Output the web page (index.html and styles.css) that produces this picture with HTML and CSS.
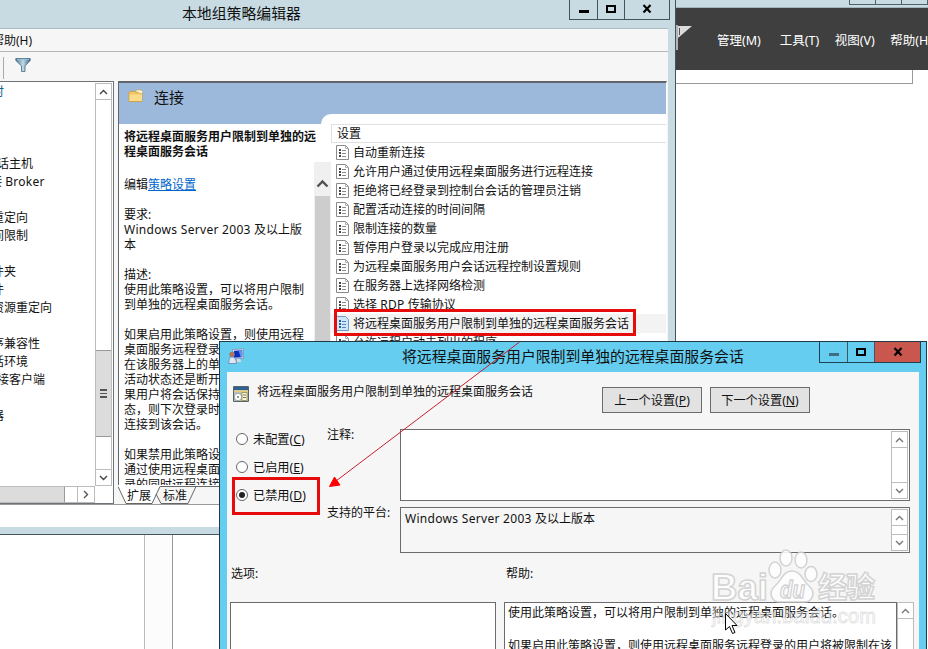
FILE: index.html
```html
<!DOCTYPE html>
<html lang="zh-CN">
<head>
    <meta charset="UTF-8">
    <title>本地组策略编辑器</title>
    <link rel="stylesheet" href="styles.css">
</head>
<body>
<svg class="defs" width="0" height="0">
    <symbol id="doc" viewBox="0 0 13 15">
        <path d="M.5.5h9l3 3v11H.5z" fill="#fff" stroke="#8a8a8a"/>
        <path d="M9.5.5v3h3" fill="none" stroke="#b0b0b0"/>
        <path d="M3 4h2v2H3zM3 7h2v2H3zM3 10h2v2H3z" fill="#444"/>
        <path d="M6 5.5h4M6 8.5h4M6 11.5h4" stroke="#8a8a8a"/>
    </symbol>
    <symbol id="doc-blue" viewBox="0 0 13 15">
        <path d="M.5.5h9l3 3v11H.5z" fill="#cfe5f8" stroke="#6f9cc5"/>
        <path d="M3 4h2v2H3zM3 7h2v2H3zM3 10h2v2H3z" fill="#235f9c"/>
        <path d="M6 5.5h4M6 8.5h4M6 11.5h4" stroke="#4f86bb"/>
    </symbol>
    <symbol id="up" viewBox="0 0 9 6"><path d="M1 5l3.5-3.5L8 5" fill="none" stroke="currentColor" stroke-width="1.4"/></symbol>
    <symbol id="down" viewBox="0 0 9 6"><path d="M1 1l3.5 3.5L8 1" fill="none" stroke="currentColor" stroke-width="1.4"/></symbol>
    <symbol id="win-min" viewBox="0 0 10 10"><path d="M0 6h10v3H0z" fill="currentColor"/></symbol>
    <symbol id="win-max" viewBox="0 0 10 10"><path d="M1 2h8v6H1z" fill="none" stroke="currentColor" stroke-width="2"/></symbol>
    <symbol id="win-close" viewBox="0 0 10 10"><path d="M1.5 1l7 7.500M8.500 1l-7 7.500" stroke="currentColor" stroke-width="2.100"/></symbol>
</svg>

<div class="desktop">
    <!-- Server manager in the background -->
    <div class="manager">
        <div class="manager-top">
            <div class="manager-buttons"><i></i><i></i><i></i></div>
        </div>
        <div class="manager-bar">
            <svg class="flag" width="17" height="25" viewBox="0 0 17 25"><path d="M0 0h2v25H0z" fill="#b5b5b5"/><path d="M2 1h14L2 13z" fill="#dcdcdc"/><path d="M3.500 3v7" stroke="#555"/></svg>
            <span>管理(M)</span>
            <span>工具(T)</span>
            <span>视图(V)</span>
            <span>帮助(H)</span>
        </div>
        <div class="manager-panel"></div>
    </div>
    <div class="behind"><div class="behind-gap"></div></div>

    <!-- Group policy editor -->
    <div class="editor">
        <div class="editor-title">
            <span class="title-text">本地组策略编辑器</span>
            <div class="win-buttons">
                <b class="min"><svg width="10" height="10"><use href="#win-min"/></svg></b>
                <b class="max"><svg width="10" height="10"><use href="#win-max"/></svg></b>
                <b class="close"><svg width="10" height="10"><use href="#win-close"/></svg></b>
            </div>
        </div>
        <div class="editor-client">
            <div class="menu"><span>帮助(H)</span></div>
            <div class="toolbar">
                <svg width="16" height="16" viewBox="0 0 16 16">
                    <defs><linearGradient id="funnel"><stop offset="0" stop-color="#4b7491"/><stop offset=".5" stop-color="#c3dbea"/><stop offset="1" stop-color="#35607e"/></linearGradient></defs>
                    <path d="M.8 1.500h14.400v2L10 9v5.500H6.500V9L.8 3.500z" fill="url(#funnel)" stroke="#4a6e88" stroke-width=".8"/>
                    <path d="M2 2.700h12" stroke="#9cc0d8"/>
                </svg>
            </div>
            <div class="panes">
                <div class="tree-pane">
                    <div class="tree-main">
                        <ul class="tree">
                            <li class="accent">时</li>
                            <li></li><li></li><li></li>
                            <li class="near">话主机</li>
                            <li class="far">接 <span class="latin">Broker</span></li>
                            <li></li>
                            <li>重定向</li>
                            <li>间限制</li>
                            <li></li>
                            <li>件夹</li>
                            <li>件</li>
                            <li>资源重定向</li>
                            <li></li>
                            <li>序兼容性</li>
                            <li>话环境</li>
                            <li class="near">接客户端</li>
                            <li></li>
                            <li>器</li>
                        </ul>
                        <div class="scroll tree-scroll">
                            <div class="scroll-btn"><svg width="9" height="6"><use href="#up"/></svg></div>
                            <div class="scroll-track"><div class="tree-thumb"><i></i><i></i><i></i></div></div>
                            <div class="scroll-btn"><svg width="9" height="6"><use href="#down"/></svg></div>
                        </div>
                    </div>
                    <div class="tree-hscroll">
                        <div class="hthumb"></div>
                        <div class="hbtn"><svg width="6" height="9" viewBox="0 0 6 9"><path d="M1 1l3.500 3.500L1 8" fill="none" stroke="#555" stroke-width="1.400"/></svg></div>
                    </div>
                </div>
                <div class="detail-pane">
                    <div class="detail-view">
                        <div class="detail-head">
                            <svg width="16" height="14" viewBox="0 0 16 14"><path d="M1 3.500l1-1h5l1 1h6v9H1z" fill="#f3c663" stroke="#c99a3c" stroke-width=".8"/><path d="M8 3V1h5l1.500 1.500V5z" fill="#fff6d8" stroke="#c9a85a" stroke-width=".7"/><path d="M1.500 5.500h12.500V12H1.500z" fill="#fbdc88"/></svg>
                            <span>连接</span>
                        </div>
                        <div class="detail-body">
                            <div class="description">
                                <h2>将远程桌面服务用户限制到单独的远<br>程桌面服务会话</h2>
                                <p class="edit">编辑<a>策略设置</a></p>
                                <p>要求:<br><span class="latin">Windows Server 2003</span> 及以上版<br>本</p>
                                <p>描述:<br>使用此策略设置，可以将用户限制<br>到单独的远程桌面服务会话。</p>
                                <p>如果启用此策略设置，则使用远程<br>桌面服务远程登录<br>在该服务器上的单<br>活动状态还是断开<br>果用户将会话保持<br>态，则下次登录时<br>连接到该会话。</p>
                                <p>如果禁用此策略设<br>通过使用远程桌面<br>录的同时远程连接</p>
                            </div>
                            <div class="desc-scroll">
                                <div class="desc-up"><svg width="13" height="9" viewBox="0 0 13 9"><path d="M1.500 7.500l5-5 5 5" fill="none" stroke="#505050" stroke-width="2.400"/></svg></div>
                                <div class="desc-thumb"></div>
                            </div>
                            <div class="settings">
                                <div class="settings-head">设置</div>
                                <ul>
                                    <li><svg width="13" height="15"><use href="#doc"/></svg>自动重新连接</li>
                                    <li><svg width="13" height="15"><use href="#doc"/></svg>允许用户通过使用远程桌面服务进行远程连接</li>
                                    <li><svg width="13" height="15"><use href="#doc"/></svg>拒绝将已经登录到控制台会话的管理员注销</li>
                                    <li><svg width="13" height="15"><use href="#doc"/></svg>配置活动连接的时间间隔</li>
                                    <li><svg width="13" height="15"><use href="#doc"/></svg>限制连接的数量</li>
                                    <li><svg width="13" height="15"><use href="#doc"/></svg>暂停用户登录以完成应用注册</li>
                                    <li><svg width="13" height="15"><use href="#doc"/></svg>为远程桌面服务用户会话远程控制设置规则</li>
                                    <li><svg width="13" height="15"><use href="#doc"/></svg>在服务器上选择网络检测</li>
                                    <li><svg width="13" height="15"><use href="#doc"/></svg><span>选择 <span class="latin">RDP</span> 传输协议</span></li>
                                    <li class="selected"><svg width="13" height="15"><use href="#doc-blue"/></svg>将远程桌面服务用户限制到单独的远程桌面服务会话</li>
                                    <li><svg width="13" height="15"><use href="#doc"/></svg>允许远程启动未列出的程序</li>
                                </ul>
                            </div>
                        </div>
                    </div>
                    <div class="tabs">
                        <svg class="tab-lines" width="550" height="20" viewBox="0 0 550 20"><path d="M0 1.500L8 18.500H34L42 1.500H550V0H0z" fill="#fff"/><path d="M0 1.500L8 18.500H34L42 1.500H550M38 9l5 9.500h27L78 1.500" fill="none" stroke="#666"/></svg>
                        <span>扩展</span><span>标准</span>
                    </div>
                </div>
            </div>
            <div class="status"></div>
        </div>
    </div>

    <!-- Policy setting dialog -->
    <div class="dialog">
        <div class="dialog-title">
            <svg class="app-icon" width="17" height="17" viewBox="0 0 17 17"><path d="M4.500 1.500l11-.5v9.500l-11 .5z" fill="#eef2f8" stroke="#7f8da8" stroke-width=".8"/><path d="M5.800 2.700l8.500-.4v7l-8.500.4z" fill="#0a2ec0"/><path d="M10.500 2.500l3.800-.2v7l-1.500.1z" fill="#5d94f0"/><path d="M9 11h3l1.500 3H9z" fill="#d8d8e0"/><circle cx="4" cy="6.500" r="2.700" fill="#a8795c"/><path d="M.8 15.500c0-4.500 1.200-6.500 3.200-6.500s4.300 2 4.300 6.500z" fill="#dfe8f4" stroke="#6483aa" stroke-width=".8"/></svg>
            <span class="title-text">将远程桌面服务用户限制到单独的远程桌面服务会话</span>
            <div class="win-buttons">
                <b class="min"><svg width="10" height="10"><use href="#win-min"/></svg></b>
                <b class="max"><svg width="10" height="10"><use href="#win-max"/></svg></b>
                <b class="close"><svg width="10" height="10"><use href="#win-close"/></svg></b>
            </div>
        </div>
        <div class="dialog-client">
            <div class="dialog-head">
                <svg width="16" height="16" viewBox="0 0 16 16"><path d="M.5.5h15v15H.5z" fill="#b9c2b4" stroke="#56646c"/><path d="M1 1h14v3H1z" fill="#2f5f93"/><path d="M1 4.500h14v1.500H1z" fill="#e6cf7a"/><circle cx="5" cy="11" r="3.700" fill="#fff" stroke="#7b898e" stroke-width=".7"/><circle cx="5" cy="11" r="1" fill="#66727a"/><path d="M9 6.500h5v8H9z" fill="#fffbe0" stroke="#a99a5c"/><path d="M10 9h3M10 11.500h3" stroke="#77775c"/></svg>
                <span class="dialog-name">将远程桌面服务用户限制到单独的远程桌面服务会话</span>
                <button>上一个设置(<u>P</u>)</button>
                <button>下一个设置(<u>N</u>)</button>
            </div>
            <div class="dialog-form">
                <div class="radios">
                    <label><i class="radio"></i><span>未配置(<u>C</u>)</span></label>
                    <label><i class="radio"></i><span>已启用(<u>E</u>)</span></label>
                    <label><i class="radio checked"></i><span>已禁用(<u>D</u>)</span></label>
                </div>
                <div class="fields">
                    <div class="field comment">
                        <span class="caption">注释:</span>
                        <div class="box">
                            <div class="box-text"></div>
                            <div class="scroll">
                                <div class="scroll-btn"><svg width="9" height="6"><use href="#up"/></svg></div>
                                <div class="scroll-track"></div>
                                <div class="scroll-btn"><svg width="9" height="6"><use href="#down"/></svg></div>
                            </div>
                        </div>
                    </div>
                    <div class="field platform">
                        <span class="caption">支持的平台:</span>
                        <div class="box">
                            <div class="box-text"><span class="latin">Windows Server 2003</span> 及以上版本</div>
                            <div class="scroll">
                                <div class="scroll-btn"><svg width="9" height="6"><use href="#up"/></svg></div>
                                <div class="scroll-track"></div>
                                <div class="scroll-btn"><svg width="9" height="6"><use href="#down"/></svg></div>
                            </div>
                        </div>
                    </div>
                </div>
            </div>
            <div class="lower-captions"><span>选项:</span><span>帮助:</span></div>
            <div class="lower-boxes">
                <div class="options-box"></div>
                <div class="help-box">使用此策略设置，可以将用户限制到单独的远程桌面服务会话。<br><br>如果启用此策略设置，则使用远程桌面服务远程登录的用户将被限制在该</div>
                <div class="scroll">
                    <div class="scroll-btn"><svg width="9" height="6"><use href="#up"/></svg></div>
                    <div class="scroll-track"></div>
                </div>
            </div>
        </div>
    </div>

    <!-- Annotations, watermark and pointer drawn over the windows -->
    <div class="mark mark-setting"></div>
    <div class="mark mark-disabled"></div>
    <svg class="overlay" width="928" height="649" viewBox="0 0 928 649">
        <path d="M519.500 342L336 481" stroke="#c8202c" stroke-width="1" fill="none"/>
        <path d="M329.500 486.500l5-9.500 5.500 8z" fill="#f00" stroke="#f00"/>
        <g class="watermark">
            <text class="wm-brand" x="711" y="600" textLength="57" lengthAdjust="spacingAndGlyphs">Bai</text>
            <ellipse cx="775" cy="570" rx="6" ry="8"/>
            <ellipse cx="786" cy="558" rx="6" ry="8"/>
            <ellipse cx="801" cy="560" rx="6" ry="8"/>
            <ellipse cx="811" cy="574" rx="6" ry="7.500"/>
            <path d="M792 571c9 0 11 10 17 15 7 6 4 16-5 16-7 0-17 0-24 0-9 0-12-10-5-16 6-5 8-15 17-15z"/>
            <text class="wm-du" x="780" y="598" textLength="25" lengthAdjust="spacingAndGlyphs">du</text>
            <text class="wm-cn" x="818" y="598" textLength="57">经验</text>
            <text class="wm-url" x="712" y="623" textLength="164">jingyan.baidu.com</text>
        </g>
        <path d="M725.500 613.500v16.500l4-3.500 3 7 2.500-1-3-7h5z" fill="#fff" stroke="#000"/>
    </svg>
</div>
</body>
</html>
```
FILE: styles.css
```css
* {
    margin: 0;
    padding: 0;
    box-sizing: border-box;
}

body {
    font-family: "Noto Sans", "Noto Sans CJK SC", sans-serif;
    font-size: 12px;
    color: #111;
    background: #fff;
    overflow: hidden;
}

ul {
    list-style: none;
}

svg {
    display: block;
    flex-shrink: 0;
}

.defs {
    position: absolute;
}

.desktop {
    position: relative;
    width: 928px;
    height: 649px;
    overflow: hidden;
    white-space: nowrap;
}

.latin {
    letter-spacing: 0.3px;
}

/* Server manager */
.manager {
    position: absolute;
    left: 676px;
    top: 0;
    width: 252px;
}

.manager-top {
    height: 8px;
    background: #c8dbe2;
    border-bottom: 1px solid #a5b4ba;
    display: flex;
    justify-content: flex-end;
}

.manager-buttons {
    display: flex;
    width: 79px;
    height: 5px;
    border: 1px solid #4f626c;
    border-width: 0 0 1px 1px;
}

.manager-buttons i {
    width: 27px;
    border-right: 1px solid #4f626c;
}

.manager-bar {
    display: flex;
    align-items: center;
    height: 62px;
    padding-top: 1px;
    background: #3f3f3f;
    color: #fff;
    overflow: hidden;
}

.manager-bar span {
    margin-right: 15.5px;
    font-size: 12.5px;
}

.manager-bar span:nth-of-type(1) {
    margin-right: 19px;
}

.flag {
    margin-right: 24px;
    margin-top: -4px;
}

.manager-panel {
    width: 237px;
    height: 14px;
    border: 1px solid #999;
    border-width: 0 1px 1px 0;
}

.behind {
    position: absolute;
    left: 0;
    top: 535px;
    width: 219px;
    height: 114px;
    padding-left: 144px;
}

.behind-gap {
    width: 29px;
    height: 114px;
    background: #fcfcfc;
    border-left: 1px solid #bbb;
    border-right: 1px solid #999;
}

/* Window buttons */
.win-buttons {
    display: flex;
    border: 1px solid #44545c;
    border-top: 0;
}

.win-buttons b {
    display: flex;
    align-items: center;
    justify-content: center;
    padding-bottom: 1px;
    color: #000;
}

.win-buttons b + b {
    border-left: 1px solid #44545c;
}

.title-text {
    font-size: 14.87px;
    flex: 1;
}

/* Scrollbars */
.scroll {
    display: flex;
    flex-direction: column;
    width: 17px;
    border: 1px solid #bcbcbc;
    background: #fff;
    color: #777;
}

.scroll-btn {
    display: flex;
    align-items: center;
    justify-content: center;
    height: 15px;
    flex-shrink: 0;
}

.scroll-track {
    flex: 1;
    border: 1px solid #bcbcbc;
    border-width: 1px 0;
}

/* Editor window */
.editor {
    position: absolute;
    left: 0;
    top: 0;
    width: 676px;
    height: 535px;
    padding-right: 7px;
    background: #c8dbe2;
    border: 1px solid #44545c;
    border-width: 0 1px 1px 0;
}

.editor-title {
    display: flex;
    height: 28px;
    padding-left: 182px;
    margin-right: -2px;
}

.editor-title .title-text {
    line-height: 27px;
}

.editor-title .win-buttons {
    width: 101px;
    height: 20px;
}

.editor-title .min {
    width: 27px;
}

.editor-title .max {
    width: 27px;
}

.editor-title .close {
    flex: 1;
}

.editor-client {
    height: 499px;
    background: #f6f6f6;
    border-top: 1px solid #aebcc2;
}

.menu {
    height: 23px;
    line-height: 23px;
    border-bottom: 1px solid #b8b8b8;
}

.menu span {
    margin-left: -8px;
}

.toolbar {
    display: flex;
    height: 29px;
    padding-top: 5px;
    padding-left: 14px;
}

.toolbar::before {
    content: "";
    width: 1px;
    height: 22px;
    margin-left: -11px;
    margin-right: 11px;
    background: #aaa;
}

.panes {
    display: flex;
    gap: 4px;
    height: 424px;
    padding-right: 2px;
    border-bottom: 1px solid #999;
}

.tree-pane {
    width: 114px;
    height: 423px;
    border: 1px solid #6e7377;
    border-left: 0;
    background: #fff;
}

.tree-main {
    display: flex;
    height: 404px;
    padding-right: 1px;
}

.tree {
    flex: 1;
    padding-top: 1px;
    overflow: hidden;
}

.tree li {
    height: 18px;
    line-height: 18px;
    margin-left: -8px;
}

.tree .near {
    margin-left: -3px;
}

.tree .far {
    margin-left: -10px;
}

.tree .accent {
    color: #17628e;
}

.tree-scroll {
    margin-top: 1px;
    color: #444;
}

.tree-thumb {
    display: flex;
    flex-direction: column;
    align-items: center;
    justify-content: center;
    gap: 2px;
    height: 87px;
    margin-top: 250px;
    border: 1px solid #999;
    border-width: 1px 0;
    background: #dcdcdc;
}

.tree-thumb i {
    width: 7px;
    height: 1.5px;
    background: #555;
}

.tree-hscroll {
    display: flex;
    height: 17px;
    width: 95px;
    border: 1px solid #bcbcbc;
    border-left: 0;
}

.hthumb {
    width: 65px;
    background: #dcdcdc;
    border-right: 1px solid #999;
}

.hbtn {
    display: flex;
    align-items: center;
    justify-content: center;
    width: 17px;
    margin-left: auto;
    border-left: 1px solid #bcbcbc;
}

.detail-pane {
    flex: 1;
    min-width: 0;
}

.detail-view {
    height: 404px;
    overflow: hidden;
    background: #fff;
    border: 1px solid #62666a;
    border-width: 2px 0 0 1px;
    margin-right: -1px;
    border-right: 1px solid #fff;
}

.detail-head {
    display: flex;
    align-items: flex-start;
    gap: 10px;
    height: 41px;
    padding: 6px 0 0 9px;
    background: #9cb8da;
}

.detail-head span {
    font-size: 15px;
    line-height: 17px;
}

.detail-body {
    display: flex;
    height: 362px;
}

.description {
    width: 195px;
    padding: 5px 0 0 5px;
    line-height: 15px;
}

.description h2 {
    font-size: 12px;
    font-weight: bold;
}

.description p {
    margin-bottom: 15px;
}

.description .edit {
    margin-top: 18px;
}

.description a {
    color: #0066cc;
    text-decoration: underline;
}

.desc-scroll {
    width: 17px;
    height: 323px;
    margin-top: 38px;
    background: #f0f0f0;
}

.desc-up {
    display: flex;
    align-items: center;
    justify-content: center;
    height: 34px;
    padding-top: 8px;
}

.desc-thumb {
    width: 15px;
    height: 289px;
    margin-left: 1px;
    background: #cdcdcd;
}

.settings {
    flex: 1;
    height: 371px;
    margin-top: -10px;
    margin-left: -10px;
    padding: 10px 0 0 10px;
    background: linear-gradient(#fff, #fff) 0 0 / 100% 10px no-repeat;
    border-top-left-radius: 10px;
}

.settings-head {
    height: 19px;
    line-height: 17px;
    padding-left: 5px;
    border: 1px solid #e0e0e0;
    border-right: 0;
}

.settings li {
    display: flex;
    align-items: center;
    gap: 4px;
    height: 19px;
    padding-left: 5px;
    padding-bottom: 1px;
}

.settings li svg {
    margin-top: 1px;
}

.settings .selected {
    background: #f3f3f3;
}

.tabs {
    display: flex;
    position: relative;
    height: 19px;
    padding-left: 9px;
    gap: 12px;
    line-height: 21px;
    overflow: hidden;
}

.tabs span {
    position: relative;
}

.tab-lines {
    position: absolute;
    left: 0;
    top: 0;
}

.status {
    height: 22px;
    background: #fff;
}

/* Dialog */
.dialog {
    position: absolute;
    left: 219px;
    top: 341px;
    width: 708px;
    height: 320px;
    padding: 0 7px;
    background: #64cdf0;
    border: 1px solid #1d3a46;
}

.dialog-title {
    display: flex;
    height: 30px;
    margin-right: -2px;
}

.app-icon {
    margin: 6px 157px 0 1px;
}

.dialog-title .title-text {
    line-height: 28px;
}

.dialog-title .win-buttons {
    width: 102px;
    height: 21px;
    border-color: #1d4252;
}

.dialog-title .min {
    width: 27px;
    color: #3d6e82;
}

.dialog-title .max {
    width: 27px;
}

.dialog-title .close {
    flex: 1;
    background: #c9574e;
}

.dialog-client {
    height: 290px;
    background: #f6f6f6;
}

.dialog-head {
    display: flex;
    align-items: flex-start;
    height: 57px;
    padding: 14px 0 0 6px;
}

.dialog-name {
    width: 345px;
    margin-left: 8px;
    line-height: 12px;
}

.dialog-head button {
    width: 100px;
    height: 26px;
    margin: 1px 8px 0 0;
    border: 1px solid #6b6b6b;
    background: #e2e2e2;
    color: #111;
    font: inherit;
    font-size: 12.2px;
}

.dialog-form {
    display: flex;
    height: 124px;
}

.radios {
    display: flex;
    flex-direction: column;
    gap: 12px;
    width: 100px;
    padding: 2px 0 0 9px;
}

.radios label {
    display: flex;
    align-items: center;
    gap: 5px;
    height: 16px;
    font-size: 12.2px;
}

.radio {
    display: flex;
    align-items: center;
    justify-content: center;
    width: 12px;
    height: 12px;
    border: 1px solid #666;
    border-radius: 50%;
    background: #fff;
}

.checked::before {
    content: "";
    width: 6px;
    height: 6px;
    border-radius: 50%;
    background: #222;
}

.fields {
    display: flex;
    flex-direction: column;
    gap: 6px;
}

.field {
    display: flex;
}

.caption {
    width: 73px;
    line-height: 12px;
}

.box {
    display: flex;
    width: 510px;
    padding: 1px;
    border: 1px solid #6b6b6b;
}

.box-text {
    flex: 1;
    padding: 1px 0 0 3px;
    line-height: 18px;
}

.comment .box {
    height: 72px;
    background: #fff;
}

.platform .box {
    height: 46px;
}

.lower-captions {
    display: flex;
    padding-left: 4px;
    height: 49px;
    line-height: 42px;
}

.lower-captions span {
    width: 275px;
}

.lower-boxes {
    display: flex;
    height: 60px;
    padding-left: 3px;
}

.options-box {
    width: 266px;
    margin-right: 8px;
    border: 1px solid #6b6b6b;
    background: #fff;
}

.help-box {
    width: 393px;
    padding: 2px 3px;
    border: 1px solid #6b6b6b;
    background: #fff;
    line-height: 16.5px;
    overflow: hidden;
}

/* Annotations */
.mark {
    position: absolute;
    border: 3px solid #e60c0c;
}

.mark-setting {
    left: 334px;
    top: 309px;
    width: 302px;
    height: 27px;
}

.mark-disabled {
    left: 232px;
    top: 477px;
    width: 88px;
    height: 38px;
}

.overlay {
    position: absolute;
    left: 0;
    top: 0;
}

.watermark {
    fill: #fff;
    stroke: #cdcdcd;
    stroke-width: 1.5;
    opacity: 0.85;
}

.wm-brand {
    font: bold 37px "Liberation Sans", sans-serif;
}

.wm-du {
    font: bold italic 24px "Liberation Sans", sans-serif;
}

.wm-cn {
    font: bold 29px "Noto Sans CJK SC", sans-serif;
}

.wm-url {
    font: 20px "Liberation Sans", sans-serif;
    stroke-width: 0.8;
    opacity: 0.7;
}
```
